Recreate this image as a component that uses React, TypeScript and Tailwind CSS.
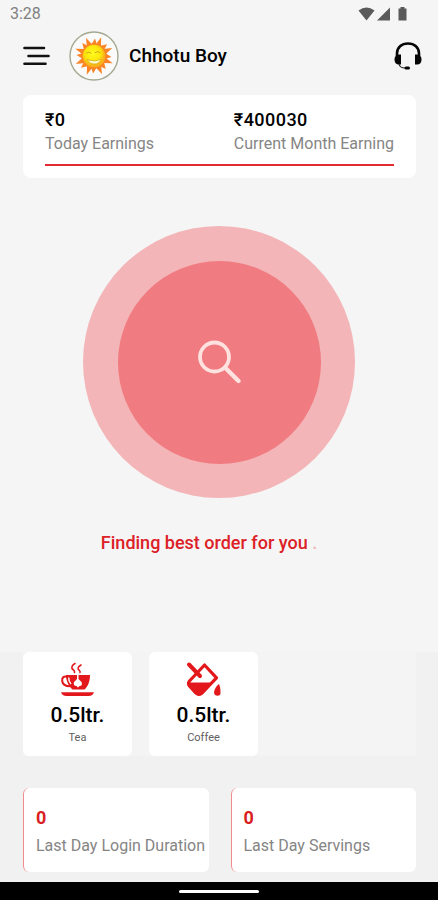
import type { ReactNode } from 'react';

const rays = Array.from({ length: 16 }, (_, i) => i * 22.5);

const StatusBar = () => (
  <div className="flex h-7 items-center justify-between pl-2.5 pr-7">
    <span className="text-base leading-6 text-[#808080]">3:28</span>
    <svg viewBox="0 0 52 16" className="h-4 w-[52px]" fill="#5a5a5a" aria-hidden="true">
      <path d="M0.5 4.5Q8.5 -1.5 16.5 4.5L8.5 14.5Z" />
      <path d="M19 14.5L32 1.5V14.5Z" />
      <path d="M42.5 1H46.5V2.5H48.5V14.5H40.5V2.5H42.5Z" />
    </svg>
  </div>
);

const SunLogo = () => (
  <svg viewBox="0 0 50 50" className="h-[50px] w-[50px]" aria-hidden="true">
    <defs>
      <radialGradient id="sun" cx="45%" cy="40%">
        <stop offset="0" stopColor="#fffb20" />
        <stop offset="0.7" stopColor="#fbe60c" />
        <stop offset="1" stopColor="#f8b51a" />
      </radialGradient>
    </defs>
    <circle cx="25" cy="25" r="24" fill="#fafafa" stroke="#a3aa90" strokeWidth="1.4" />
    <g fill="#fb8424">
      {rays.map((angle, i) => (
        <path
          key={angle}
          d={i % 2 ? 'M22 14L24.5 5L28 14Z' : 'M22 14L26 7.5L28 14Z'}
          transform={`rotate(${angle} 25 25)`}
        />
      ))}
      <circle cx="25" cy="25" r="12.5" />
    </g>
    <circle cx="25" cy="25" r="11.3" fill="url(#sun)" />
    <g fill="none" strokeLinecap="round">
      <path d="M17.5 22Q19.5 20 22 22M26 21.5Q29 19.5 31 21.5" stroke="#c9a51c" />
      <path d="M18.5 28.5Q26 31.5 32 28Q30 33.5 25 33Q20.5 33 18.5 28.5Z" fill="#fffbd0" stroke="#d9ae18" strokeWidth="0.8" />
    </g>
  </svg>
);

const HeadsetIcon = () => (
  <svg viewBox="0 0 28 28" className="h-7 w-7" aria-hidden="true">
    <path d="M3 14V11.5C3 5.5 7.5 1.5 14 1.5S25 5.5 25 11.5V14" fill="none" stroke="#050505" strokeWidth="2.6" />
    <path d="M7 12.5V22.5H5C2 22.5 0.5 20.5 0.5 17.5S2 12.5 5 12.5Z" fill="#050505" />
    <path d="M21 12.5V22.5H23C26 22.5 27.5 20.5 27.5 17.5S26 12.5 23 12.5Z" fill="#050505" />
    <path d="M5 22C5.5 24.5 7.5 26 11 26" fill="none" stroke="#222" strokeWidth="1.2" />
    <rect x="10.5" y="24.4" width="5.5" height="3" rx="1.5" fill="#050505" />
  </svg>
);

const TeaIcon = () => (
  <svg viewBox="0 0 36 37" className="h-[37px] w-9" aria-hidden="true">
    <g fill="none" stroke="#e3181c" strokeLinecap="round">
      <path d="M15 3.5C11.5 5.5 11 8 13 9.5Q15 11 14.5 12.5" strokeWidth="1.6" />
      <path d="M21 5C17.5 7 17.5 9 19 10Q20.5 11.5 20 12.5" strokeWidth="1.6" />
      <path d="M7.5 17C4 15.5 1.7 17.5 2.2 21C2.7 24.5 5.5 26.3 10 26.3" strokeWidth="2" />
    </g>
    <path d="M6 15H30C30 21 28 26.5 24.5 29.5H12.5C9 26.5 6 21 6 15Z" fill="#e3181c" />
    <path d="M17 14.5V19L14 22Q13 26 16.5 26L18 27.5L19.5 26Q23 26 21.5 22L18.5 19V14.5Z" fill="#fff" />
    <path d="M8.7 17.5Q8.5 21 11 24" fill="none" stroke="#fff" strokeWidth="1.4" />
    <path d="M1 32.3H34Q33 36 28.5 36H6.5Q2 36 1 32.3Z" fill="#e3181c" />
  </svg>
);

const CoffeeIcon = () => (
  <svg viewBox="0 0 36 37" className="h-[37px] w-9" aria-hidden="true">
    <path d="M18.5 5L30.5 17.8L16 33Q13 35.5 10 33L3.5 26Q1.5 23.5 3.5 21Z" fill="#fff" stroke="#e3181c" strokeWidth="3.2" strokeLinejoin="round" />
    <path d="M2.5 22.5H27.5L17 34Q13 37 9 34L2.5 27Q1 25 2.5 22.5Z" fill="#e3181c" />
    <path d="M3 4.5L14 16" fill="none" stroke="#e3181c" strokeWidth="4" strokeLinecap="round" />
    <path d="M33 24Q34.5 27 34.5 33Q34.5 35.8 31.5 35.8T28 32.5Q28.5 27.5 33 24Z" fill="#e3181c" />
  </svg>
);

const Earning = ({ amount, label }: { amount: string; label: string }) => (
  <div>
    <p className="text-lg font-medium leading-6 tracking-wide text-black">{amount}</p>
    <p className="text-base leading-6 text-[#858585]">{label}</p>
  </div>
);

const StockCard = ({ icon, amount, label }: { icon: ReactNode; amount: string; label: string }) => (
  <div className="flex w-[109px] flex-col items-center rounded-md bg-white pb-2.5 pt-2">
    {icon}
    <p className="mt-1 text-[21px] font-medium leading-7 text-black">{amount}</p>
    <p className="text-[11px] leading-[17px] text-[#606060]">{label}</p>
  </div>
);

const StatCard = ({ value, label }: { value: string; label: string }) => (
  <div className="rounded-md border-l border-[#f08b8e] bg-white pb-3 pl-3 pt-4">
    <p className="text-lg font-bold leading-7 text-[#d91f24]">{value}</p>
    <p className="whitespace-nowrap text-base leading-7 text-[#858585]">{label}</p>
  </div>
);

export default function App() {
  return (
    <div className="flex min-h-screen flex-col bg-[#f5f5f5] font-['Roboto',sans-serif]">
      <StatusBar />

      <header className="flex h-[55px] items-center pl-[23px] pr-4">
        <button type="button" aria-label="Menu">
          <svg viewBox="0 0 27 20" className="h-5 w-[27px]" fill="none" stroke="#111" strokeWidth="2.6" strokeLinecap="round" aria-hidden="true">
            <path d="M1.5 2H21M5.5 10H25.5M1.5 17.8H22.5" />
          </svg>
        </button>
        <div className="ml-[19px]">
          <SunLogo />
        </div>
        <h1 className="ml-2.5 pt-0.5 text-[19px] font-medium text-black">Chhotu Boy</h1>
        <button type="button" aria-label="Support" className="ml-auto">
          <HeadsetIcon />
        </button>
      </header>

      <main className="flex grow flex-col">
        <section className="ml-[23px] mr-[22px] mt-3 rounded-lg bg-white px-[22px] pb-3 pt-[13px]">
          <div className="flex justify-between">
            <Earning amount="₹0" label="Today Earnings" />
            <Earning amount="₹400030" label="Current Month Earning" />
          </div>
          <div className="mt-2 h-0.5 bg-[#e22a30]" />
        </section>

        <section className="flex grow flex-col items-center pt-12">
          <div className="flex h-[272px] w-[272px] items-center justify-center rounded-full bg-[#f3b5b7]">
            <div className="flex h-[203px] w-[203px] items-center justify-center rounded-full bg-[#f07b80]">
              <svg viewBox="0 0 44 44" className="h-11 w-11" fill="none" stroke="#ffe1df" strokeWidth="3.8" aria-hidden="true">
                <circle cx="17.5" cy="17" r="14.5" />
                <path d="M28 27.5L41.5 41" strokeLinecap="round" strokeWidth="4.4" />
              </svg>
            </div>
          </div>
          <p className="mt-[33px] pr-5 text-lg font-medium leading-6 text-[#dc2026]">
            Finding best order for you <span className="text-[#efb4b6]">.</span>
          </p>
        </section>

        <section className="bg-[#f1f1f1] pb-2.5 pl-[23px] pr-[22px]">
          <div className="flex gap-[17px] bg-[#f4f4f4]">
            <StockCard icon={<TeaIcon />} amount="0.5ltr." label="Tea" />
            <StockCard icon={<CoffeeIcon />} amount="0.5ltr." label="Coffee" />
          </div>
          <div className="mt-8 grid grid-cols-2 gap-[22px]">
            <StatCard value="0" label="Last Day Login Duration" />
            <StatCard value="0" label="Last Day Servings" />
          </div>
        </section>
      </main>

      <div className="flex h-[18px] items-center justify-center bg-black">
        <div className="h-[3px] w-20 rounded-full bg-white" />
      </div>
    </div>
  );
}
